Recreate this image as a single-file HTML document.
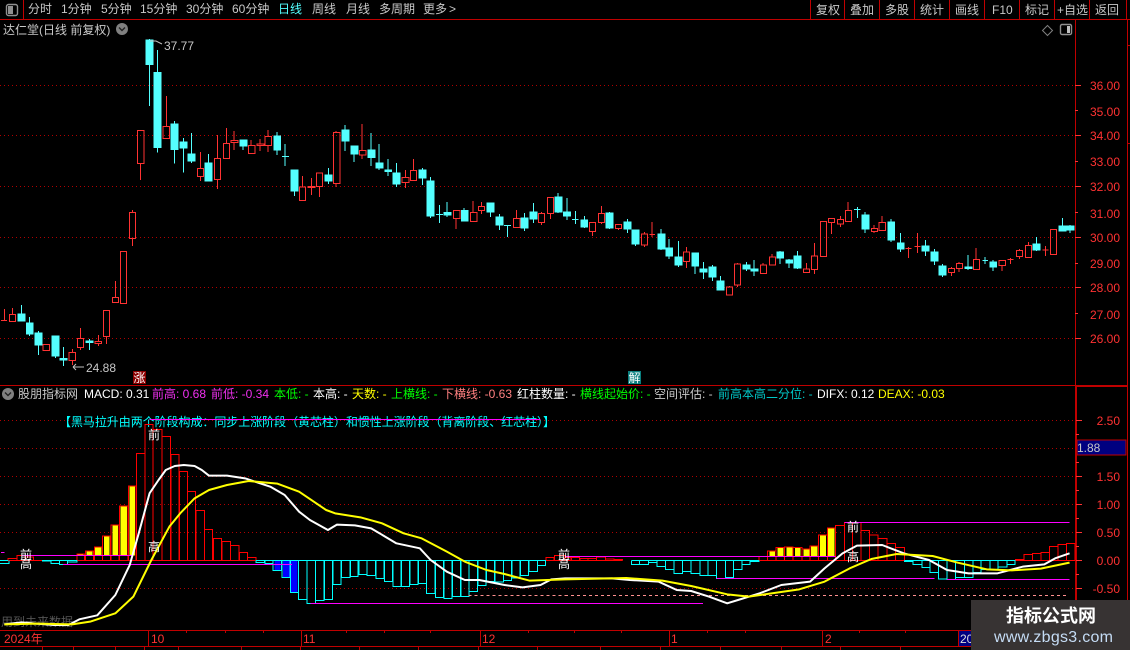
<!DOCTYPE html>
<html><head><meta charset="utf-8"><style>
html,body{margin:0;padding:0;background:#000;width:1130px;height:650px;overflow:hidden}
svg{display:block}
text{font-family:"Liberation Sans","WenQuanYi Zen Hei","Noto Sans CJK SC",sans-serif;font-size:12px}
path,line,rect{vector-effect:non-scaling-stroke}
.s{shape-rendering:crispEdges}
.cy{fill:#54ffff;stroke:#54ffff;stroke-width:1}
.rd{fill:none;stroke:#ff3232;stroke-width:1}
.t{fill:#c8c8c8}
.p{fill:#ff3232}
</style></head><body>
<svg width="1130" height="650" viewBox="0 0 1130 650" xmlns="http://www.w3.org/2000/svg">
<rect width="1130" height="650" fill="#000"/>
<!-- grid -->
<path class="s" d="M0 85.5H1075M0 135.5H1075M0 186.5H1075M0 237.5H1075M0 287.5H1075M0 338.5H1075M0 420.5H1075M0 448.5H1075M0 476.5H1075M0 504.5H1075M0 532.5H1075M0 588.5H1075" stroke="#b00000" stroke-dasharray="1 3" fill="none"/>
<!-- structural lines -->
<path class="s" d="M0 19.5H1130M23.5 0V19M810.5 0V19M844.5 0V19M879.5 0V19M914.5 0V19M949.5 0V19M984.5 0V19M1019.5 0V19M1054.5 0V19M1089.5 0V19M1126.5 0V19M0 385.5H1127M1075.5 19V630M1076.5 385V630M0 630.5H1127M0 646.5H971M1127.5 19V600M1075 386.5H1127M148.5 630V646M301.5 630V646M480.5 630V646M669.5 630V646M822.5 630V646M958.5 630V646M186.5 630V633M225.5 630V633M263.5 630V633M346.5 630V633M384.5 630V633M430.5 630V633M528.5 630V633M574.5 630V633M621.5 630V633M707.5 630V633M745.5 630V633M859.5 630V633M905.5 630V633M42.5 646V650M73.5 646V650M115.5 646V650M144.5 646V650M178.5 646V650M241.5 646V650M300.5 646V650M359.5 646V650M418.5 646V650M478.5 646V650M537.5 646V650M600.5 646V650M660.5 646V650M720.5 646V650M781.5 646V650M840.5 646V650M900.5 646V650M1127 45.5H1130M1127 143.5H1130" stroke="#c00000" fill="none"/>
<path class="s" d="M1075 85.5H1081M1075 110.5H1078M1075 135.5H1081M1075 161.5H1078M1075 186.5H1081M1075 212.5H1078M1075 237.5H1081M1075 263.5H1078M1075 287.5H1081M1075 313.5H1078M1075 338.5H1081M1076 420.5H1082M1076 434.5H1079M1076 462.5H1079M1076 476.5H1082M1076 490.5H1079M1076 504.5H1082M1076 518.5H1079M1076 532.5H1082M1076 546.5H1079M1076 560.5H1082M1076 574.5H1079M1076 588.5H1082" stroke="#ff3232" fill="none"/>
<!-- toolbar -->
<rect x="6.5" y="4.5" width="11" height="11" rx="2" fill="none" stroke="#909090" stroke-width="1.4"/>
<rect x="8" y="6" width="5" height="8" fill="#909090"/>
<g class="t">
<text x="28" y="13">分时</text><text x="61" y="13">1分钟</text><text x="101" y="13">5分钟</text><text x="140" y="13">15分钟</text><text x="186" y="13">30分钟</text><text x="232" y="13">60分钟</text>
<text x="278" y="13" style="fill:#54ffff">日线</text><text x="312" y="13">周线</text><text x="346" y="13">月线</text><text x="379" y="13">多周期</text><text x="423" y="13">更多</text><text x="449" y="13">&gt;</text>
<text x="816" y="14">复权</text><text x="850" y="14">叠加</text><text x="885" y="14">多股</text><text x="920" y="14">统计</text><text x="955" y="14">画线</text><text x="992" y="14">F10</text><text x="1025" y="14">标记</text><text x="1057" y="14">+自选</text><text x="1095" y="14">返回</text>
<text x="3" y="34">达仁堂(日线 前复权)</text>
</g>
<circle cx="122" cy="29" r="6" fill="#808080"/><path d="M119 27.5L122 30.5L125 27.5" stroke="#222" stroke-width="1.4" fill="none"/>
<path d="M1047.5 25.5L1052.5 30.5L1047.5 35.5L1042.5 30.5Z" fill="none" stroke="#808080"/>
<rect x="1060.5" y="24.5" width="11" height="10" rx="1.5" fill="none" stroke="#909090" stroke-width="1.4"/><rect x="1067" y="26" width="3" height="7" fill="#c0c0c0"/>
<!-- price labels -->
<g class="p" text-anchor="end">
<text x="1120" y="90">36.00</text><text x="1120" y="116">35.00</text><text x="1120" y="140">34.00</text><text x="1120" y="166">33.00</text><text x="1120" y="191">32.00</text><text x="1120" y="218">31.00</text><text x="1120" y="242">30.00</text><text x="1120" y="268">29.00</text><text x="1120" y="292">28.00</text><text x="1120" y="319">27.00</text><text x="1120" y="343">26.00</text>
<text x="1120" y="425">2.50</text><text x="1120" y="481">1.50</text><text x="1120" y="509">1.00</text><text x="1120" y="537">0.50</text><text x="1120" y="565">0.00</text><text x="1120" y="593">-0.50</text>
</g>
<!-- candles -->
<g class="s" transform="scale(.36036,.33333)">
<path class="cy" d="M415 117V318M405 120H424V194H405ZM437 150V458M428 217H447V443H428ZM484 363V491M475 372H494V449H475ZM509 414V518M500 426H519V444H500ZM531 399V489M522 462H541V483H522ZM578 462V543M569 489H588V543H569ZM675 420V450M666 420H685V438H666ZM769 396V465M760 408H779V450H760ZM791 432V498M783 469H802M817 510V588M808 510H827V573H808ZM911 504V552M902 525H921V543H902ZM958 375V453M949 390H968V423H949ZM983 438V486M974 438H993V462H974ZM1030 399V498M1021 450H1040V473H1021ZM1052 432V510M1043 489H1063V504H1043ZM1077 477V528M1068 510H1087V515H1068ZM1100 489V561M1091 519H1110V552H1091ZM1172 504V555M1163 510H1182V534H1163ZM1194 531V654M1185 543H1204V648H1185Z"/>
<path class="rd" d="M381 391H399V491H381ZM390 491V540M453 379H471V416H453ZM462 288V379M548 505H565V530H548ZM556 456V505M556 530V543M595 475H612V539H595ZM603 405V475M603 539V567M620 430H637V476H620ZM628 384V430M641 421H660V428H641ZM650 393V421M650 428V450M689 436H707V461H689ZM697 420V436M713 432H732V437H713ZM722 417V432M722 437V453M736 409H754V437H736ZM744 390V409M744 437V456M831 561H848V602H831ZM839 528V561M855 559H874V563H855ZM864 534V559M864 563V585M878 519H895V560H878ZM886 560V591M925 397H943V551H925ZM933 393V397M933 551V561M997 451H1015V465H997ZM1005 372V451M1005 465V477M1116 532H1135V548H1116ZM1125 510V532M1125 548V564M1139 511H1156V542H1139ZM1147 477V511"/>
</g>
<g class="s" transform="translate(0,190) scale(.36036,.33333)">
<path class="rd" d="M3 391H20M12 357V391M26 373H43V395H26ZM34 354V373M120 463H138V482H120ZM192 487H210V512H192ZM201 477V487M201 512V525M215 445H232V473H215ZM223 414V445M223 473V480M264 454H282V460H264ZM273 435V454M273 460V468M287 361H304V440H287ZM295 440V462M312 322H329V338H312ZM320 273V322M334 184H351V341H334ZM359 67H376V146H359ZM367 60V67M367 146V168M1258 61H1276V86H1258ZM1266 86V117M1305 67H1323V95H1305ZM1313 33V67M1328 49H1345V62H1328ZM1336 36V49M1336 62V72M1425 85H1443V113H1425ZM1433 60V85M1494 70H1511V98H1494ZM1502 66V70M1502 98V105M1519 22H1536V71H1519ZM1527 71V87"/>
<path class="cy" d="M59 345V393M50 372H69V393H50ZM82 381V438M73 399H92V432H73ZM107 423V495M97 429H117V465H97ZM154 438V504M144 438H164V498H144ZM176 471V528M167 505H186V510H167ZM248 447V480M239 453H258V458H239ZM1219 45V99M1210 73H1229M1241 36V81M1232 67H1252V75H1232ZM1288 54V93M1280 61H1299V93H1280ZM1361 39V81M1352 39H1371V66H1352ZM1386 72V120M1377 81H1396V105H1377ZM1408 105V141M1399 106H1418M1455 69V123M1446 84H1465V114H1446ZM1480 39V99M1471 66H1490V87H1471ZM1549 9V69M1540 21H1560V66H1540Z"/>
</g>
<g class="s" transform="translate(565,190) scale(.36036,.33333)">
<path class="cy" d="M5 24V90M-4 66H15V78H-4ZM29 63V102M20 88H37M54 78V114M44 90H63V111H44ZM123 66V117M114 69H133V114H114ZM173 87V129M164 96H183V117H164ZM195 120V168M186 120H205V162H186ZM267 117V180M258 132H277V177H258ZM289 147V207M280 174H299V198H280ZM315 153V231M305 201H324V225H305ZM361 189V252M352 189H371V228H352ZM384 216V267M375 237H394V246H375ZM409 225V273M400 231H419V261H400ZM431 258V300M422 273H441V300H422ZM503 216V243M494 225H513V237H494ZM525 210V258M516 237H535V243H516ZM597 183V222M588 186H607V204H588ZM622 207V234M613 210H632V219H613ZM645 183V237M636 198H655V234H636ZM811 51V84M802 58H820M833 66V129M824 75H843V117H824ZM905 87V156M896 96H915V150H896ZM931 129V186M922 159H941V177H922ZM1000 150V198M991 168H1010V183H991ZM1025 177V225M1016 186H1035V213H1016ZM1047 222V261M1038 228H1057V255H1038ZM1119 195V240M1110 231H1129V236H1110ZM1166 201V222M1158 211H1174M1188 210V243M1179 216H1198V231H1179ZM1308 141V183M1299 162H1318V180H1299ZM1380 84V123M1371 108H1390V123H1371ZM1402 105V129M1393 108H1412V120H1393Z"/>
<path class="rd" d="M68 97H85V125H68ZM76 125V138M93 70H110V98H93ZM101 48V70M101 98V102M140 103H157V116H140ZM148 116V120M212 132H229V165H212ZM220 126V132M220 165V171M234 133H250M242 96V141M329 186H346V215H329ZM337 171V186M337 215V234M448 291H465V315H448ZM456 288V291M470 222H487V285H470ZM478 219V222M478 285V291M542 225H559V251H542ZM550 219V225M567 201H584V225H567ZM575 192V201M662 237H679V248H662ZM670 219V237M684 198H701V239H684ZM692 159V198M692 239V252M709 94H726V200H709ZM731 85H748V98H731ZM739 98V132M756 88H773V102H756ZM764 78V88M764 102V111M778 61H795V95H778ZM786 36V61M850 115H867V125H850ZM858 105V115M858 125V129M872 97H890V122H872ZM880 78V97M945 175H962M953 171V204M970 170H987M978 129V189M1064 235H1081V248H1064ZM1072 231V235M1072 248V258M1086 220H1103V236H1086ZM1094 216V220M1094 236V246M1133 208H1150V239H1133ZM1141 174V208M1205 211H1222V227H1205ZM1213 227V243M1228 209H1245M1236 204V222M1253 181H1270V200H1253ZM1261 177V181M1261 200V207M1278 166H1295V203H1278ZM1286 156V166M1325 180H1342M1333 168V198M1347 118H1364V194H1347Z"/>
</g>
<!-- chart markers -->
<text x="164" y="50" class="t">37.77</text>
<path d="M150 41L156 41L162 44" stroke="#c0c0c0" fill="none"/>
<path d="M73 367H84M73 367L76 364M73 367L76 370" stroke="#c0c0c0" fill="none"/>
<text x="86" y="372" class="t">24.88</text>
<rect x="133" y="371" width="13" height="13" fill="#8b0000"/><text x="133.5" y="382" style="fill:#fff">涨</text>
<rect x="628" y="371" width="13" height="13" fill="#0a7f7f"/><text x="628.5" y="382" style="fill:#fff">解</text>
<!-- indicator header -->
<circle cx="8" cy="394" r="6" fill="#808080"/><path d="M5 392.5L8 395.5L11 392.5" stroke="#222" stroke-width="1.4" fill="none"/>
<g>
<text x="18" y="398" class="t">股朋指标网</text>
<text x="84" y="398" style="fill:#fff">MACD: 0.31</text>
<text x="152" y="398" style="fill:#f030f0">前高: 0.68</text>
<text x="211" y="398" style="fill:#f030f0">前低: -0.34</text>
<text x="274" y="398" style="fill:#00ff00">本低: -</text>
<text x="313" y="398" style="fill:#fff">本高: -</text>
<text x="352" y="398" style="fill:#ffff00">天数: -</text>
<text x="391" y="398" style="fill:#00ff00">上横线: -</text>
<text x="442" y="398" style="fill:#ff8080">下横线: -0.63</text>
<text x="517" y="398" style="fill:#fff">红柱数量: -</text>
<text x="580" y="398" style="fill:#00ff00">横线起始价: -</text>
<text x="654" y="398" class="t">空间评估: -</text>
<text x="718" y="398" style="fill:#00c8c8">前高本高二分位: -</text>
<text x="817" y="398" style="fill:#fff">DIFX: 0.12</text>
<text x="878" y="398" style="fill:#ffff00">DEAX: -0.03</text>
</g>
<text x="59" y="426" textLength="496" lengthAdjust="spacing" style="fill:#00ffff">【黑马拉升由两个阶段构成：同步上涨阶段（黄芯柱）和惯性上涨阶段（背离阶段、红芯柱）】</text>
<rect x="1077" y="440" width="49" height="15" fill="#000080" stroke="#c00000"/>
<text x="1077" y="452" style="fill:#c8c8c8">1.88</text>
<text x="1" y="626" style="fill:#555">用到未来数据</text>
<!-- MACD histogram left -->
<g transform="translate(0,510) scale(.36036,.33333)">
<g class="s">
<path fill="#ffff00" d="M215 132H232V137H215ZM240 123H257V137H240ZM264 111H282V137H264ZM289 78H304V137H289ZM312 45H328V137H312ZM335 -12H352V137H335ZM360 -72H375V137H360Z"/>
<path fill="#0000ff" d="M762 151H779V182H762ZM785 151H803V203H785ZM808 151H825V248H808Z"/>
<path fill="none" stroke="#ff0000" d="M22 151H710M1515 151H1568M22 151V145H47V151M47 151V137H70V151M70 151V141H93V151M213 151V132H235V151M237 151V123H260V151M262 151V111H284V151M284 151V78H307V151M308 151V45H330V151M331 151V-12H355V151M356 151V-72H378V151M379 151V-170H402V151M403 151V-257H425V151M425 151V-242H449V151M450 151V-220H473V151M474 151V-167H497V151M498 151V-116H521V151M521 151V-56H543V151M544 151V2H568V151M568 151V58H590V151M592 151V85H615V151M616 151V94H640V151M640 151V106H663V151M664 151V127H687V151M687 151V142H710V151M1515 151V142H1538V151M1539 151V137H1568V151"/>
<path fill="none" stroke="#00ffff" d="M0 151H22M117 151H213M711 151H1515M0 161H25V151M117 153H141M142 151V160H165V151M165 151V164H188V151M188 151V156H213V151M711 151V158H734V151M735 151V161H758V151M758 151V182H781V151M782 151V203H805V151M806 151V248H829V151M829 151V268H852V151M852 151V281H875V151M876 151V272H899V151M900 151V269H923V151M924 151V224H946V151M947 151V203H971V151M972 151V199H994V151M996 151V193H1018V151M1019 151V197H1042V151M1043 151V206H1066V151M1067 151V214H1089V151M1090 151V230H1113V151M1114 151V230H1137V151M1138 151V224H1160V151M1161 151V220H1184V151M1184 151V250H1207V151M1208 151V262H1231V151M1232 151V266H1254V151M1255 151V259H1278V151M1279 151V259H1301V151M1302 151V245H1325V151M1326 151V227H1349V151M1350 151V215H1372V151M1373 151V216H1397V151M1397 151V212H1420V151M1421 151V204H1443V151M1444 151V197H1467V151M1468 151V185H1491V151M1492 151V166H1514V151"/>
<path fill="none" stroke="#ff00ff" d="M60 136H365M175 163H810M862 280H1568M415 -271H1500M3 127H12"/>
<path fill="none" stroke="#ff9090" stroke-dasharray="3 3" d="M1300 257H1568"/>
</g>
</g>
<!-- MACD histogram right -->
<g transform="translate(565,510) scale(.36036,.33333)">
<g class="s">
<path fill="#ffff00" d="M568 123H583V139H568ZM590 113H606V139H590ZM615 111H631V139H615ZM638 113H654V139H638ZM662 117H678V139H662ZM682 108H700V139H682ZM707 75H724V139H707ZM730 54H748V139H730Z"/>
<path fill="none" stroke="#ff0000" d="M0 151H160M538 151H942M1250 151H1415M0 151V143H16V151M18 151V143H40V151M41 151V146H64V151M64 151V146H88V151M88 151V141H112V151M112 151V147H136V151M136 151V148H160V151M538 151V139H562V151M562 151V123H586V151M586 151V113H609V151M609 151V111H633V151M633 151V113H657V151M657 151V117H680V151M680 151V108H704V151M704 151V75H728V151M728 151V54H751V151M751 151V46H775V151M775 151V37H798V151M798 151V37H822V151M822 151V61H845V151M845 151V75H869V151M869 151V85H893V151M893 151V100H917V151M917 151V112H942V151M1250 151V148H1274V151M1274 151V133H1297V151M1297 151V131H1321V151M1321 151V127H1344V151M1344 151V110H1368V151M1368 151V103H1392V151M1392 151V100H1415V151"/>
<path fill="none" stroke="#00ffff" d="M184 151H538M942 151H1250M184 151V163H207V151M207 151V163H232V151M232 151V158H255V151M255 151V170H279V151M279 151V179H303V151M303 151V191H326V151M326 151V185H350V151M350 151V191H374V151M374 151V197H397V151M397 151V197H421V151M421 151V205H445V151M445 151V203H468V151M468 151V179H491V151M491 151V164H514V151M514 151V155H538V151M942 151V155H966V151M966 151V164H990V151M990 151V172H1013V151M1013 151V187H1037V151M1037 151V207H1060V151M1060 151V209H1084V151M1084 151V203H1108V151M1108 151V203H1132V151M1132 151V187H1155V151M1155 151V178H1179V151M1179 151V178H1202V151M1202 151V171H1226V151M1226 151V164H1249V151"/>
<path fill="none" stroke="#ff00ff" d="M775 37H1400M0 139H750M420 205H1025M1060 209H1400M0 280H383"/>
<path fill="none" stroke="#ff9090" stroke-dasharray="3 3" d="M0 257H1395"/>
</g>
</g>
<!-- DIF / DEA lines -->
<g fill="none" stroke-width="2" stroke-linejoin="round">
<g transform="translate(0,510) scale(.36036,.33333)">
<path stroke="#fff" style="vector-effect:non-scaling-stroke" d="M12 343L60 337L100 341L150 345L190 345L220 328L270 316L320 255L360 165L385 70L400 10L415 -50L440 -90L460 -120L485 -132L510 -135L540 -132L560 -120L580 -103L630 -103L680 -95L750 -70L790 -45L830 5L860 30L880 42L910 60L935 44L985 46L1030 55L1100 100L1165 115L1195 150L1240 185L1290 210L1330 210L1400 225L1450 232L1500 225L1530 208L1568 205L1668 205L1698 205L1748 210L1828 215L1878 240L1918 243L1968 260L2018 280L2048 270L2108 250L2168 225L2248 215L2288 175L2338 130L2378 107L2448 105L2508 130L2578 150L2628 180L2688 190L2768 190L2838 170L2898 163L2928 145L2968 130"/>
<path stroke="#ffff00" style="vector-effect:non-scaling-stroke" d="M12 343L100 341L200 343L250 335L320 310L370 260L420 150L470 50L500 10L540 -35L580 -60L630 -75L690 -87L770 -79L830 -55L905 0L930 10L1000 22L1060 40L1120 70L1170 85L1240 125L1290 155L1350 180L1400 192L1470 212L1568 208L1738 204L1838 212L1918 228L2018 253L2078 260L2218 238L2288 215L2358 175L2418 147L2488 132L2588 138L2658 158L2738 178L2808 181L2888 176L2968 158"/>
</g>
</g>
<!-- 前 高 labels -->
<g style="fill:#fff" text-anchor="middle">
<text x="154" y="439" style="fill:#fff">前</text><text x="154" y="551" style="fill:#fff">高</text>
<text x="853" y="531" style="fill:#fff">前</text><text x="853" y="561" style="fill:#fff">高</text>
<text x="26" y="559" style="fill:#fff">前</text><text x="26" y="568" style="fill:#fff">高</text>
<text x="564" y="559" style="fill:#fff">前</text><text x="564" y="568" style="fill:#fff">高</text>
</g>
<!-- time axis labels -->
<g class="p"><text x="4" y="643">2024年</text><text x="151" y="643">10</text><text x="303" y="643">11</text><text x="482" y="643">12</text><text x="671" y="643">1</text><text x="825" y="643">2</text></g>
<rect x="959" y="631" width="14" height="15" fill="#000080"/><text x="960" y="643" style="fill:#ddd">20</text>
<!-- watermark -->
<rect x="971" y="600" width="159" height="50" fill="#373333"/>
<text x="1006" y="622" style="fill:#fff;font-size:18px;font-weight:bold" textLength="90">指标公式网</text>
<text x="994" y="642" style="fill:#c5dcf5;font-size:16px" textLength="119">www.zbgs3.com</text>
</svg>
</body></html>
